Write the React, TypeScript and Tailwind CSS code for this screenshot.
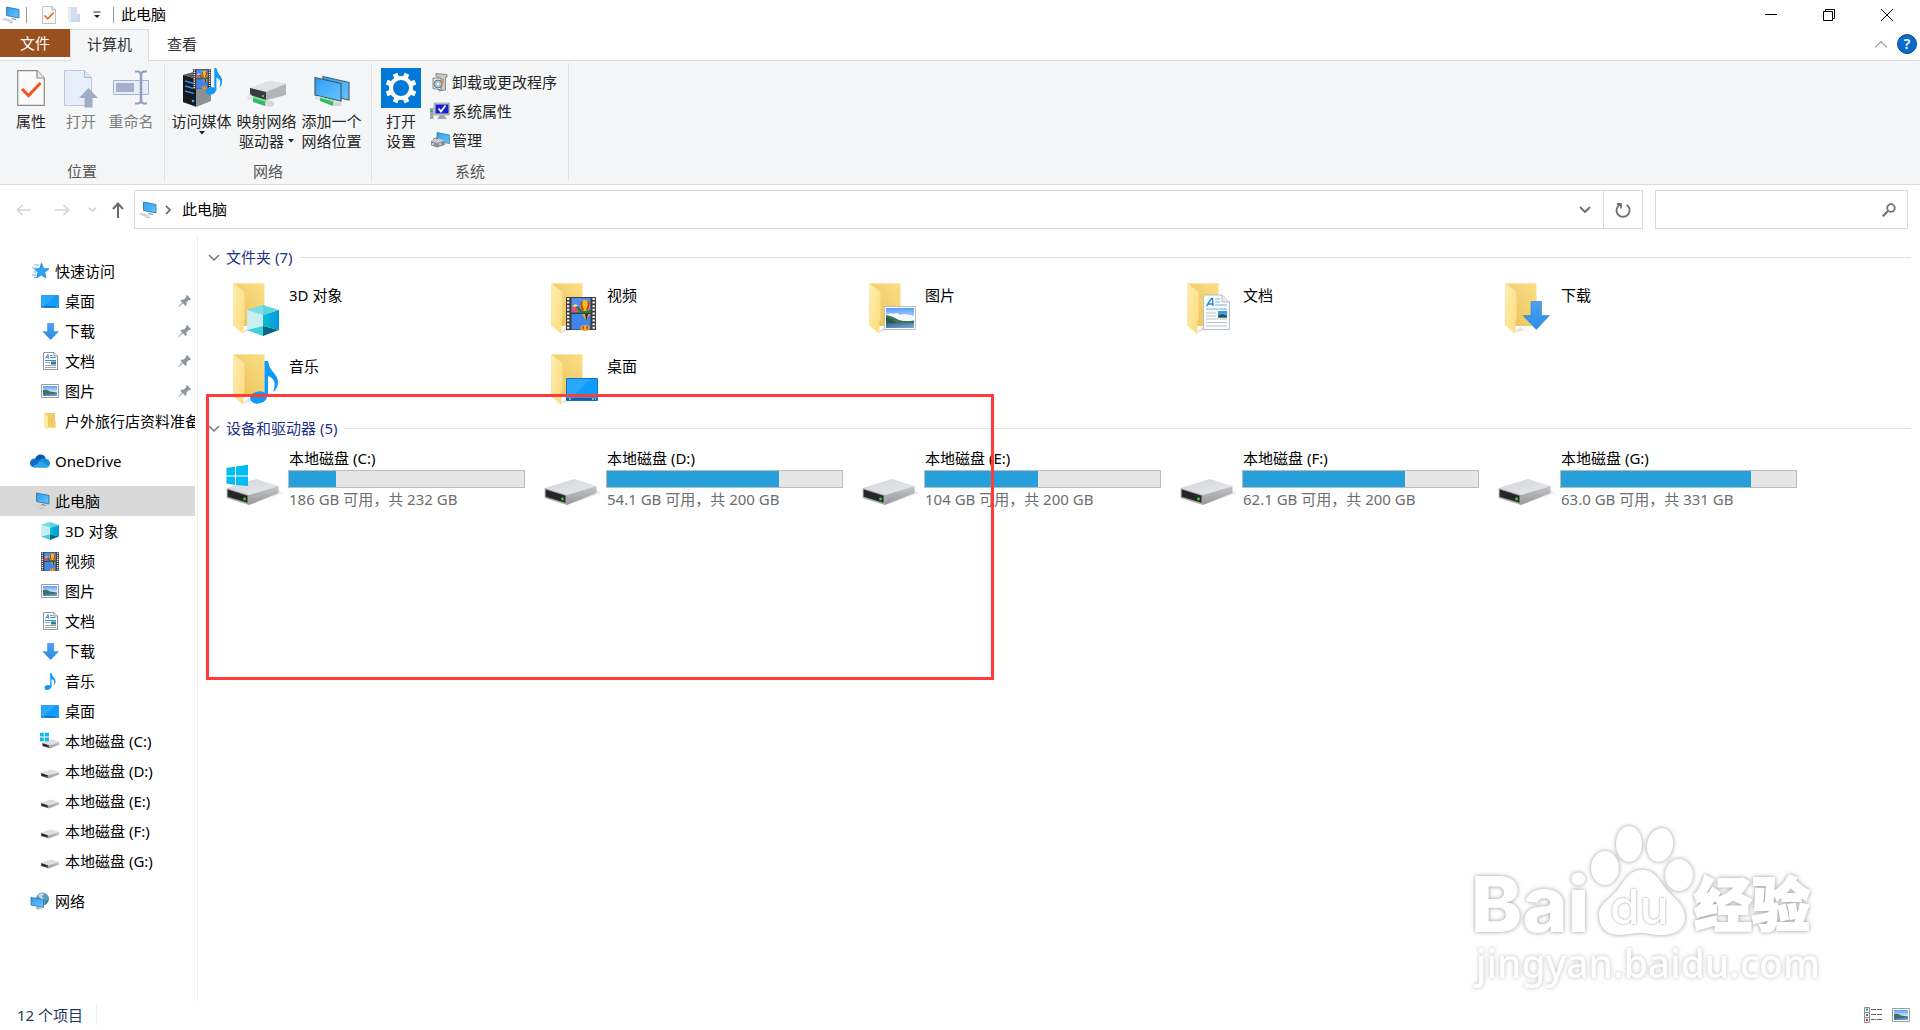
import React, { useState } from "react";

type Kind = "cube" | "film" | "picture" | "doc" | "download" | "music" | "desktop";

type NavItem = {
  id: string;
  label: string;
  icon: React.ReactNode;
  pinned?: boolean;
};

const drives = [
  { letter: "C", text: "186 GB 可用，共 232 GB", used: 20, system: true },
  { letter: "D", text: "54.1 GB 可用，共 200 GB", used: 73 },
  { letter: "E", text: "104 GB 可用，共 200 GB", used: 48 },
  { letter: "F", text: "62.1 GB 可用，共 200 GB", used: 69 },
  { letter: "G", text: "63.0 GB 可用，共 331 GB", used: 81 }
];

const folders: { label: string; kind: Kind }[] = [
  { label: "3D 对象", kind: "cube" },
  { label: "视频", kind: "film" },
  { label: "图片", kind: "picture" },
  { label: "文档", kind: "doc" },
  { label: "下载", kind: "download" },
  { label: "音乐", kind: "music" },
  { label: "桌面", kind: "desktop" }
];

// shared gradients, referenced by id from the icons below
function Gradients() {
  return (
    <svg className="absolute h-0 w-0" aria-hidden="true">
      <defs>
        <linearGradient id="g-folder" x1="0" y1="1" x2="1" y2="0">
          <stop offset="0" stopColor="#e9bf57" />
          <stop offset="1" stopColor="#fbdf86" />
        </linearGradient>
        <linearGradient id="g-flap" x1="0" y1="0" x2="1" y2="1">
          <stop offset="0" stopColor="#ffeeb0" />
          <stop offset="1" stopColor="#fcdb7c" />
        </linearGradient>
        <linearGradient id="g-screen" x1="0" y1="0" x2="1" y2="1">
          <stop offset="0" stopColor="#2e9df0" />
          <stop offset="1" stopColor="#66c4ff" />
        </linearGradient>
        <linearGradient id="g-sky" x1="0" y1="0" x2="0" y2="1">
          <stop offset="0" stopColor="#5a9cf5" />
          <stop offset="1" stopColor="#e8f4ff" />
        </linearGradient>
        <linearGradient id="g-sea" x1="0" y1="0" x2="1" y2="1">
          <stop offset="0" stopColor="#2f5f94" />
          <stop offset="1" stopColor="#7fb0d4" />
        </linearGradient>
        <linearGradient id="g-arrow" x1="0" y1="0" x2="0" y2="1">
          <stop offset="0" stopColor="#4ba0ee" />
          <stop offset="1" stopColor="#2a8fe8" />
        </linearGradient>
        <linearGradient id="g-cube" x1="0" y1="0" x2="1" y2="0">
          <stop offset="0" stopColor="#06bfd6" />
          <stop offset="1" stopColor="#0a93dc" />
        </linearGradient>
        <linearGradient id="g-side" x1="0" y1="0" x2="0" y2="1">
          <stop offset="0" stopColor="#c4c5c8" />
          <stop offset="1" stopColor="#97989b" />
        </linearGradient>
        <linearGradient id="g-top" x1="0" y1="0" x2="1" y2="1">
          <stop offset="0" stopColor="#d3d4d8" />
          <stop offset="1" stopColor="#e9eaed" />
        </linearGradient>
      </defs>
    </svg>
  );
}

function Art({ kind }: { kind: Kind }) {
  switch (kind) {
    case "cube":
      return (
        <g>
          <path d="M37 25 53 30 37 35 21 30Z" fill="#5fd3de" />
          <path d="M37 25V35L21 30Z" fill="#7bdde5" />
          <path d="M21 30 37 35V46L21 50Z" fill="#c9eff2" />
          <path d="M53 30 37 35V46L53 50Z" fill="url(#g-cube)" />
          <path d="M21 50 37 46V56Z" fill="#3fd0dc" />
          <path d="M53 50 37 46V56Z" fill="#046a80" />
        </g>
      );
    case "film":
      return (
        <g>
          <path d="M22 17H52V50H22Z" fill="#3c3c3e" />
          <path d="M24.2 18V50M49.7 18V50" stroke="#f1f1f1" strokeWidth="2.4" strokeDasharray="2 1.6" />
          <path d="M27.5 18H46.5V32.5H27.5Z" fill="#4f8ff0" />
          <path d="M27.5 34H46.5V49.5H27.5Z" fill="#4285ea" />
          <path d="M27.5 27 32 25 37 29 46.5 30V32.5H27.5Z" fill="#2f7a3f" />
          <path d="M27.5 27 31 26 35 32H27.5Z" fill="#e0508a" />
          <ellipse cx="41" cy="25.5" rx="5" ry="5.5" fill="#f0c020" />
          <path d="M38 21.5Q36 26 39.5 30M44 21.5Q46 26 42.5 30" stroke="#d0342c" strokeWidth="1.8" fill="none" />
          <path d="M38 34H46.5L43 39H41Z" fill="#e8a820" />
          <path d="M41 34H44L42.5 41Z" fill="#2d2850" />
          <ellipse cx="41" cy="48" rx="4.5" ry="3" fill="#f0b020" />
          <path d="M39 46V49.5M43 46V49.5" stroke="#d0342c" strokeWidth="1.5" />
          <path d="M28 26 32 24 34 26 31 27Z" fill="#f4e070" />
        </g>
      );
    case "picture":
      return (
        <g>
          <path d="M22.5 26.5H53.5V49.5H22.5Z" fill="#fff" stroke="#b4bcc4" />
          <path d="M24 28H52V43H24Z" fill="url(#g-sky)" />
          <path d="M24 35Q27 32 31 34L35 33 38 35 43 34 52 36V42H24Z" fill="#f3f9fd" />
          <path d="M24 35Q30 36 35 39T52 40.500V43H24Z" fill="#3f7359" />
          <path d="M24 43H52V48H24Z" fill="url(#g-sea)" />
          <path d="M24 37Q29 39 34 43H24Z" fill="#2c5a3c" />
        </g>
      );
    case "doc":
      return (
        <g>
          <path d="M23.500 15H42L49.500 22V49.500H23.500Z" fill="#fafbfc" stroke="#b9bec4" />
          <path d="M42 15V22H49.500" fill="#e8ebee" stroke="#b9bec4" />
          <path d="M26.500 26 31.500 18.500H32.500L33 26M28 24H33" stroke="#2a86cc" strokeWidth="1.400" fill="none" />
          <path d="M35 19H40M35 22H40M35 25H47M26 29H47" stroke="#71b5e2" />
          <path d="M26 33H36M26 36H36M26 39H47M26 42.500H47M26 46H47" stroke="#bfc4c9" />
          <path d="M38 31H47V37.500H38Z" fill="#3f98dd" />
          <path d="M38 36 42 34 47 36V37.500H38Z" fill="#234f4f" />
        </g>
      );
    case "download":
      return (
        <path d="M33 21.500H43.500V35.500H51.500L38.300 49.500 25 35.500H33Z" fill="url(#g-arrow)" stroke="#2d83cf" strokeWidth=".6" />
      );
    case "music":
      return (
        <g fill="#0f9af5">
          <ellipse cx="32.500" cy="46.500" rx="8.500" ry="6" transform="rotate(-12 32.500 46.500)" />
          <path d="M38.500 10H42Q43 17 48 22 54 29 51 36 50 39 47 41 50 33 47.500 29 45.500 26 42 25V46H38.500Z" />
        </g>
      );
    default:
      return (
        <g>
          <path d="M22.500 27.500H53.500V49.500H22.500Z" fill="#109cfb" stroke="#1272b8" />
          <path d="M23 28H47L27 47H23Z" fill="#29a8ff" />
          <path d="M23 48H53" stroke="#0c4f86" strokeWidth="1.500" />
          <path d="M25 48H27M48 48H50M51 48H52" stroke="#fff" />
        </g>
      );
  }
}

const smallBox: Record<Kind, { box: string; size: string }> = {
  cube: { box: "21 25 32 31", size: "h-[18px] w-[18px]" },
  film: { box: "22 17 30 33", size: "h-[19px] w-[18px]" },
  picture: { box: "22 26 32 24", size: "h-[14px] w-[18px]" },
  doc: { box: "23 14 27 36", size: "h-[18px] w-[15px]" },
  download: { box: "24 21 28 29", size: "h-[17px] w-[17px]" },
  music: { box: "23 10 30 43", size: "h-[17px] w-[12px]" },
  desktop: { box: "22 27 32 23", size: "h-[13px] w-[18px]" }
};

function SmallIcon({ kind }: { kind: Kind }) {
  // these two lose their frames when scaled down, so they get their own drawing
  if (kind === "picture") {
    return (
      <svg viewBox="0 0 18 14" className="h-[14px] w-[18px]" aria-hidden="true">
        <path d="M.5.5H17.500V13.500H.5Z" fill="#fff" stroke="#9a9ea2" />
        <path d="M2 2H16V9H2Z" fill="url(#g-sky)" />
        <path d="M2 6Q6 5 9 7.500L16 8.500V10H2Z" fill="#3f7359" />
        <path d="M2 9.500H16V12H2Z" fill="url(#g-sea)" />
      </svg>
    );
  }
  if (kind === "doc") {
    return (
      <svg viewBox="0 0 15 18" className="h-[18px] w-[15px]" aria-hidden="true">
        <path d="M.5.5H11L14.500 4V17.500H.5Z" fill="#fff" stroke="#8f9498" />
        <path d="M11 .5V4H14.500" fill="#e3e6e8" stroke="#8f9498" />
        <path d="M2.500 6.500 5 2.500 5.500 6.500M3.500 5.500H5.500" fill="none" stroke="#2a86cc" />
        <path d="M7 3.500H9.500M7 5.500H12.500M2 8.500H13" stroke="#2f8fd4" />
        <path d="M2 10.500H7M2 13.500H13M2 15.500H13" stroke="#9da2a6" />
        <path d="M8 9.500H13V12.500H8Z" fill="#2a7f9c" />
      </svg>
    );
  }
  const { box, size } = smallBox[kind];
  return (
    <svg viewBox={box} preserveAspectRatio="none" className={size} aria-hidden="true">
      <Art kind={kind} />
    </svg>
  );
}

function FolderIcon({ kind }: { kind: Kind }) {
  return (
    <svg viewBox="0 0 62 58" className="h-[58px] w-[62px] shrink-0" aria-hidden="true">
      <path d="M16 53 26 50 22 47Z" fill="#e4e4e4" />
      <path d="M7.500 3.500H38.500V46H7.500Z" fill="url(#g-folder)" />
      <path d="M7.500 3.500H38.500" stroke="#fbe6a4" />
      <path d="M7.500 3.500 18.500 12V40L17.500 41V54L7.500 46Z" fill="url(#g-flap)" />
      <Art kind={kind} />
    </svg>
  );
}

function WinLogo() {
  return (
    <g>
      <path d="M.5 4 9 2.500V11.500H.5ZM10 2.400 22 .7V11.500H10ZM.5 12.500H9V21L.5 19.500ZM10 12.500H22V22L10 21Z" fill="#00bcf2" />
    </g>
  );
}

function DriveArt() {
  return (
    <g>
      <path d="M24 41 57 29 52 26Z" fill="#e9e9e9" />
      <path d="M.7 24 30 15 52.500 22 23 31Z" fill="url(#g-top)" />
      <path d="M23 31 52.500 22V29L23 41Z" fill="url(#g-side)" />
      <path d="M.7 24 23 31V41L.7 34Z" fill="#a6a7a9" />
      <path d="M1.700 25.500 21.500 31.700V38.700L1.700 32.700Z" fill="#252628" />
      <path d="M17.300 33.500H19.800V36.300H17.300Z" fill="#2fd02f" />
    </g>
  );
}

function DriveIcon({ system }: { system?: boolean }) {
  return (
    <svg viewBox="0 0 62 44" className="mb-px h-[44px] w-[62px] shrink-0" aria-hidden="true">
      <DriveArt />
      {system && <WinLogo />}
    </svg>
  );
}

function SmallDrive({ system }: { system?: boolean }) {
  return (
    <svg viewBox="-2 -6 58 50" className="h-[18px] w-5" aria-hidden="true">
      <g transform={system ? "translate(4 0) scale(.95 1)" : undefined}>
        <DriveArt />
      </g>
      {system && (
        <path d="M-2-5H9V6H-2ZM12-5H24V6H12ZM-2 9H9V20H-2ZM12 9H24V20H12Z" fill="#0fb8ee" />
      )}
    </svg>
  );
}

function PcIcon() {
  return (
    <svg viewBox="0 0 20 18" className="h-[18px] w-5" aria-hidden="true">
      <path d="M6.500 1 19 3.500V12L6.500 9.500Z" fill="url(#g-screen)" stroke="#276ea3" strokeWidth=".8" />
      <path d="M12 12 16 13V14L11 13Z" fill="#7c8b98" />
      <path d="M1 13 5 12 13 14.500 9 16Z" fill="#cdd3d8" />
      <path d="M9 16.500 12 15.500 14 16 11 17.500Z" fill="#b9c0c7" />
    </svg>
  );
}

function StarIcon() {
  return (
    <svg viewBox="0 0 20 18" className="h-[18px] w-5" aria-hidden="true">
      <path d="M11.500 1 13.500 6.500 19 6.800 14.800 10.300 16 16 11.300 13 6.500 16 8 10.500 4.500 7 9.500 6.500Z" fill="#2ca4f5" stroke="#1f7fc8" strokeWidth=".7" />
      <path d="M4 3H9M2 6H6M3 10H6M2 13H6M4 15.500H6" stroke="#58aee8" strokeWidth=".9" />
    </svg>
  );
}

function CloudIcon() {
  return (
    <svg viewBox="0 0 20 14" className="h-[14px] w-5" aria-hidden="true">
      <path d="M5 5Q6.500.5 10.500.5 14.500.5 15.800 4.500L10 9Z" fill="#0a54b4" />
      <path d="M4.500 13.500Q0 13 0 9 .5 4.500 5 4.500 8 4.500 10 7L7 13.500Z" fill="#0f6cc9" />
      <path d="M9 6.500Q12 3.500 15.500 4.500 20 5.500 20 9.500 19.500 13.500 16 13.500H8Z" fill="#1490df" />
      <path d="M2.500 12.500 11 7.500 19 12Q17.500 13.500 16 13.500H4.500Q3.200 13.300 2.500 12.500Z" fill="#28a8ea" />
    </svg>
  );
}

function NetworkIcon() {
  return (
    <svg viewBox="0 0 20 18" className="h-[18px] w-5" aria-hidden="true">
      <circle cx="12.500" cy="7" r="6.500" fill="#5a9bbb" />
      <path d="M8 3Q12 0 14 2L12 5 14 7 11 8Z" fill="#b8dce9" />
      <path d="M15 9 18.500 7Q18 11 15.500 12.500Z" fill="#3b7fa3" />
      <path d="M1 5.500 13.500 7.500V15.500L1 13Z" fill="url(#g-screen)" stroke="#2d77ab" strokeWidth=".8" />
      <path d="M5 16 8 14.800 12 16.500 8 17.800Z" fill="#aab4bd" />
    </svg>
  );
}

function PlainFolder() {
  return (
    <svg viewBox="0 0 14 18" className="h-[18px] w-[14px]" aria-hidden="true">
      <path d="M1 1H12V15H1Z" fill="#f0cb68" />
      <path d="M12 9H13V16H5V15H12Z" fill="#ffe28a" />
      <path d="M1 1 5 4V18L1 15Z" fill="#ffe9a3" />
    </svg>
  );
}

function PinIcon() {
  return (
    <svg viewBox="0 0 14 14" className="h-[14px] w-[14px]" aria-hidden="true">
      <path d="M9 1 13 5 12 6.300 10.800 6 8.500 8.500V11L7.500 12 4.800 9.200 1 13 .5 12.500 4 8.500 2.500 6.500 3.500 5.500H6L8.200 3 8 2Z" fill="#8d979f" />
    </svg>
  );
}

function PropertiesIcon({ className }: { className: string }) {
  return (
    <svg viewBox="0 0 28 36" className={className} aria-hidden="true">
      <path d="M.7.7H20L27.300 8V35.300H.7Z" fill="#fafafa" stroke="#8c8c8c" strokeWidth="1.200" />
      <path d="M20 .7V8H27.300" fill="#ececec" stroke="#8c8c8c" strokeWidth="1.200" />
      <path d="M5 19 11.500 25.500 23.500 13" fill="none" stroke="#f0561a" strokeWidth="3" />
    </svg>
  );
}

function OpenIcon() {
  return (
    <svg viewBox="0 0 34 40" className="h-10 w-[34px]" aria-hidden="true">
      <path d="M.5 2.500H20.500L27.500 9.500V37.500H.5Z" fill="#e6eefa" stroke="#b9c9e2" />
      <path d="M20.500 2.500V9.500H27.500" fill="#dbe6f5" stroke="#a9b9d4" />
      <path d="M24.500 20 34 30H28.500V39.500H20.500V30H15Z" fill="#9fadc8" />
    </svg>
  );
}

function RenameIcon() {
  return (
    <svg viewBox="0 0 36 40" className="h-10 w-9" aria-hidden="true">
      <path d="M.5 12.500H35.500V26.500H.5Z" fill="#e6eefa" stroke="#a5b4cf" />
      <path d="M3 15H21V24H3Z" fill="#a3b1ca" />
      <path d="M28 5V34" stroke="#8fa0bd" strokeWidth="2.500" />
      <path d="M22 3.500H25Q28 4 28 7 28 4 31 3.500H34M22 35.500H25Q28 35 28 32 28 35 31 35.500H34" fill="none" stroke="#8fa0bd" strokeWidth="2" />
    </svg>
  );
}

function MediaIcon() {
  return (
    <svg viewBox="0 0 40 40" className="h-10 w-10" aria-hidden="true">
      <path d="M1 7 12 4 29 9V33L14 39 1 34Z" fill="#8f9094" />
      <path d="M1 7 14 11V38.500L1 34Z" fill="#17191d" />
      <path d="M1 7 12 4 27 7 14 11Z" fill="#5f6166" />
      <path d="M3 13 12 15.500M3 18 12 20.500M3 23 12 25.500" stroke="#2d93e8" strokeWidth="1.300" />
      <circle cx="11" cy="33" r="1.300" fill="#26b5ff" />
      <svg x="11" y="1" width="18" height="20" viewBox="22 17 30 33" preserveAspectRatio="none">
        <Art kind="film" />
      </svg>
      <svg x="23" y="0" width="18" height="27" viewBox="23 10 30 43" preserveAspectRatio="none">
        <Art kind="music" />
      </svg>
    </svg>
  );
}

function MapDriveIcon() {
  return (
    <svg viewBox="0 0 40 40" className="h-10 w-10" aria-hidden="true">
      <path d="M3 21 23 13 39 16V27L20 32 3 28Z" fill="#b3b4b7" />
      <path d="M3 20 23 12.500 39 16 19 24Z" fill="#e0e1e4" />
      <path d="M3 20 19 24V32L3 28Z" fill="#3b3c3f" />
      <path d="M15 27H17V29H15Z" fill="#31d831" />
      <path d="M0 28 3 26 7 29 6 33 1 31Z" fill="#e2e4e6" />
      <path d="M6 28 19 32 18 38 6 34Z" fill="#39b768" />
      <path d="M6 28 19 32 19 34 6 30Z" fill="#7fe09b" />
      <path d="M19 32 25 33 28 36 25 39 18 38Z" fill="#d5d8db" />
    </svg>
  );
}

function AddPlaceIcon() {
  return (
    <svg viewBox="0 0 36 40" className="h-10 w-9" aria-hidden="true">
      <path d="M9 8.500 35 14.500V32L9 26Z" fill="url(#g-screen)" stroke="#4c6476" strokeWidth="1.200" />
      <path d="M1 9.500 27 15.500V33L1 27Z" fill="url(#g-screen)" stroke="#3f5a6d" strokeWidth="1.200" />
      <path d="M1 28 6 28.500 7 33 1 31Z" fill="#e2e4e6" />
      <path d="M6 28.500 20 32.500 19 38 6 33Z" fill="#39b768" />
      <path d="M6 28.500 20 32.500V34L6 30Z" fill="#8fe7a4" />
      <path d="M20 33 27 34V38L19 38Z" fill="#d5d8db" />
    </svg>
  );
}

function GearIcon() {
  const teeth = [0, 45, 90, 135, 180, 225, 270, 315];
  return (
    <svg viewBox="0 0 40 40" className="h-10 w-10" aria-hidden="true">
      <path d="M0 0H40V40H0Z" fill="#0078d7" />
      <circle cx="20" cy="20" r="10" fill="none" stroke="#fff" strokeWidth="4" />
      {teeth.map((a) => (
        <path key={a} d="M17.500 10V4.500H22.500V10Z" fill="#fff" transform={`rotate(${a + 22.5} 20 20)`} />
      ))}
    </svg>
  );
}

function UninstallIcon() {
  return (
    <svg viewBox="0 0 20 20" className="h-5 w-5" aria-hidden="true">
      <path d="M6 1.500 17 2.500V5H15.500V18L9 19V6L6 4Z" fill="#c6c8ca" stroke="#777a7d" strokeWidth=".8" />
      <path d="M3 6H11V18L3 16.500Z" fill="#e3e6e8" stroke="#6d7175" strokeWidth=".8" />
      <circle cx="8" cy="12" r="4" fill="#a9c5d2" stroke="#4f626c" strokeWidth=".8" />
      <circle cx="8" cy="12" r="1.200" fill="#fff" />
      <path d="M11 6.500 14 7V12L12 10Z" fill="#f0963a" />
    </svg>
  );
}

function SystemIcon() {
  return (
    <svg viewBox="0 0 20 20" className="h-5 w-5" aria-hidden="true">
      <path d="M0 7H3.500V18H0Z" fill="#a2a6aa" />
      <path d="M.8 9H2.500V11H.8Z" fill="#27b53c" />
      <path d="M4 2H20V14H4Z" fill="#c9cccf" stroke="#8d9194" strokeWidth=".6" />
      <path d="M5.500 3.500H18.500V12.500H5.500Z" fill="#1420c8" />
      <path d="M8.500 7.500 11 10.500 15.500 4.500" fill="none" stroke="#fff" strokeWidth="1.800" />
      <path d="M10 14H14L17 18H7Z" fill="#a5a8ab" />
    </svg>
  );
}

function ManageIcon() {
  return (
    <svg viewBox="0 0 20 20" className="h-5 w-5" aria-hidden="true">
      <path d="M7 2.500 19.500 5V13.500L7 11Z" fill="url(#g-screen)" stroke="#3c7097" strokeWidth=".7" />
      <path d="M1 11 9 8.500 15 10.500V15L7 17.500 1 15.500Z" fill="#8a9096" />
      <path d="M1 11 9 8.500 15 10.500 7 13Z" fill="#c9cdd1" />
      <path d="M3 9.500Q5 7 8 8.500" fill="none" stroke="#6a7075" />
      <path d="M3 13V15M10 13V15" stroke="#eee" strokeWidth="1.300" />
    </svg>
  );
}

function Chevron({ className, d = "M1 1 6 6 11 1", w = "1.5" }: { className: string; d?: string; w?: string }) {
  return (
    <svg viewBox="0 0 12 7" className={className} fill="none" stroke="currentColor" strokeWidth={w} aria-hidden="true">
      <path d={d} />
    </svg>
  );
}

function Caret() {
  return (
    <svg viewBox="0 0 6 4" className="inline-block h-1 w-1.5" aria-hidden="true">
      <path d="M0 0H6L3 3.500Z" fill="#222" />
    </svg>
  );
}

function BigButton({
  icon,
  children,
  width = "w-[50px]",
  disabled
}: {
  icon: React.ReactNode;
  children: React.ReactNode;
  width?: string;
  disabled?: boolean;
}) {
  return (
    <button
      disabled={disabled}
      className={`${width} flex shrink-0 flex-col items-center whitespace-nowrap leading-5 text-[#262626] disabled:text-[#7d7d7d]`}
    >
      <span className="mb-[3px] flex h-10 items-center justify-center">{icon}</span>
      {children}
    </button>
  );
}

function Group({ label, width, children }: { label: string; width: string; children: React.ReactNode }) {
  return (
    <div className={`${width} flex flex-col justify-between border-r border-[#e0e1e3] pt-[5px]`}>
      <div className="flex pl-1">{children}</div>
      <div className="text-center leading-5 text-[#555]">{label}</div>
    </div>
  );
}

function SectionTitle({ children }: { children: React.ReactNode }) {
  return (
    <h2 className="flex h-6 items-center pl-[10px] text-[#1e3287]">
      <Chevron className="mr-[6px] h-[7px] w-3 text-[#777]" />
      {children}
      <span className="ml-2 h-px flex-1 bg-[#e2e2e2]" />
    </h2>
  );
}

function Watermark() {
  return (
    <svg
      viewBox="0 0 360 180"
      className="pointer-events-none absolute right-[93px] bottom-[36px] h-[180px] w-[360px]"
      fill="#fff"
      aria-hidden="true"
    >
      <g className="drop-shadow-[0_0_2px_#999]">
        <text x="4" y="118" className="font-['Inter'] text-[77px] font-extrabold">Bai</text>
        <text
          x="227"
          y="112"
          stroke="#fff"
          strokeWidth="2"
          className="font-['Noto_Sans_CJK_SC',sans-serif] text-[58px] font-black"
        >
          经验
        </text>
        <ellipse cx="138" cy="54" rx="14" ry="17" />
        <ellipse cx="162" cy="30" rx="13" ry="18" />
        <ellipse cx="193" cy="31" rx="13" ry="17" transform="rotate(12 193 31)" />
        <ellipse cx="212" cy="61" rx="14" ry="16" />
        <path d="M175 56C188 56 192 66 199 75 208 86 218 90 218 104 217 118 205 121 194 121 184 121 182 119 174 119 164 119 160 121 150 121 138 120 132 112 132 101 132 89 144 85 152 74 159 64 163 56 175 56Z" />
      </g>
      <text x="143" y="110" className="font-['Inter'] text-[48px] font-medium drop-shadow-[0_0_1px_#999]">du</text>
      <text x="9" y="164" className="font-['Noto_Sans'] text-[39px] font-medium drop-shadow-[0_0_2px_#bbb]">
        jingyan.baidu.com
      </text>
    </svg>
  );
}

export default function App() {
  const [selected, setSelected] = useState("pc");
  const [query, setQuery] = useState("");

  const quick: NavItem[] = [
    { id: "q-desktop", label: "桌面", icon: <SmallIcon kind="desktop" />, pinned: true },
    { id: "q-download", label: "下载", icon: <SmallIcon kind="download" />, pinned: true },
    { id: "q-doc", label: "文档", icon: <SmallIcon kind="doc" />, pinned: true },
    { id: "q-picture", label: "图片", icon: <SmallIcon kind="picture" />, pinned: true },
    { id: "q-folder", label: "户外旅行店资料准备", icon: <PlainFolder /> }
  ];

  const order: Kind[] = ["cube", "film", "picture", "doc", "download", "music", "desktop"];
  const pcItems: NavItem[] = [
    ...order.map((kind) => ({
      id: kind,
      label: folders.find((f) => f.kind === kind)!.label,
      icon: <SmallIcon kind={kind} />
    })),
    ...drives.map((d) => ({
      id: d.letter,
      label: `本地磁盘 (${d.letter}:)`,
      icon: <SmallDrive system={d.system} />
    }))
  ];

  const row = (item: NavItem, child = false) => (
    <a
      key={item.id}
      href={`#${item.id}`}
      onClick={() => setSelected(item.id)}
      className={`flex h-[30px] items-center overflow-hidden whitespace-nowrap pr-[3px] ${child ? "pl-10" : "pl-[30px]"} ${
        selected === item.id ? "bg-[#d9d9d9]" : ""
      }`}
    >
      <span className="mr-[5px] flex w-5 shrink-0 justify-center">{item.icon}</span>
      {item.label}
      {item.pinned && (
        <span className="ml-auto">
          <PinIcon />
        </span>
      )}
    </a>
  );

  return (
    <div className="relative flex min-h-screen flex-col bg-white font-['Noto_Sans','Noto_Sans_CJK_SC',sans-serif] text-[15px] leading-5 text-black">
      <Gradients />

      <header className="flex h-[29px] items-center">
        <span className="w-[21px]">
          <PcIcon />
        </span>
        <span className="ml-[5px] h-4 w-px bg-[#999]" />
        <button aria-label="属性" className="ml-[15px]">
          <PropertiesIcon className="h-[18px] w-[14px]" />
        </button>
        <button aria-label="新建文件夹" className="ml-3">
          <svg viewBox="0 0 13 18" className="h-[18px] w-[13px]" aria-hidden="true">
            <path d="M0 1H9V15H0Z" fill="#d3dfee" />
            <path d="M9 8H12V16H3V14H9Z" fill="#c9d8ea" />
            <path d="M0 1 3 3V18L0 15Z" fill="#e5edf7" />
          </svg>
        </button>
        <button aria-label="自定义快速访问工具栏" className="ml-3">
          <svg viewBox="0 0 8 8" className="h-2 w-2" aria-hidden="true">
            <path d="M.5 1H7.500" stroke="#222" />
            <path d="M1 4H7L4 7Z" fill="#222" />
          </svg>
        </button>
        <span className="ml-3 h-4 w-px bg-[#999]" />
        <h1 className="ml-[7px] pb-px">此电脑</h1>
        <div className="ml-auto flex pr-1">
          <button aria-label="最小化" className="flex h-7 w-[58px] items-center justify-center">
            <svg viewBox="0 0 12 12" className="h-3 w-3" stroke="#000" aria-hidden="true">
              <path d="M0 5.500H12" />
            </svg>
          </button>
          <button aria-label="还原" className="flex h-7 w-[58px] items-center justify-center">
            <svg viewBox="0 0 12 12" className="h-3 w-3" fill="none" stroke="#000" aria-hidden="true">
              <path d="M.5 2.500H9.500V11.500H.5ZM2.500 2.500V.5H11.500V9.500H9.500" />
            </svg>
          </button>
          <button aria-label="关闭" className="flex h-7 w-[58px] items-center justify-center">
            <svg viewBox="0 0 12 12" className="h-3 w-3" stroke="#000" aria-hidden="true">
              <path d="M0 0 12 12M12 0 0 12" />
            </svg>
          </button>
        </div>
      </header>

      <nav className="flex h-8 items-start border-b border-[#dadbdc]">
        <button className="h-7 w-[70px] bg-[#994f1e] text-white">文件</button>
        <button className="-mb-px h-8 w-[79px] border border-b-0 border-[#dadbdc] bg-[#f5f6f7] pb-[3px] text-[#333]">
          计算机
        </button>
        <button className="h-[31px] w-[66px] pb-[2px] text-[#333]">查看</button>
        <div className="ml-auto flex h-[30px] items-center gap-[10px] pr-[3px]">
          <button aria-label="最小化功能区" className="text-[#999]">
            <Chevron className="h-[7px] w-3" d="M0 6.500 6 .5 12 6.500" w="1.2" />
          </button>
          <button
            aria-label="帮助"
            className="flex h-5 w-5 items-center justify-center rounded-full border border-[#0a4a86] bg-[#0a6bcb] text-sm font-semibold text-white"
          >
            ?
          </button>
        </div>
      </nav>

      <section className="flex h-[124px] border-b border-[#dadbdc] bg-[#f5f6f7] pb-[3px] pt-[2px]">
        <Group label="位置" width="w-[165px]">
          <div className="flex pl-[2px]">
            <BigButton icon={<PropertiesIcon className="h-9 w-7" />}>属性</BigButton>
            <BigButton icon={<OpenIcon />} disabled>
              打开
            </BigButton>
            <BigButton icon={<RenameIcon />} disabled>
              重命名
            </BigButton>
          </div>
        </Group>
        <Group label="网络" width="w-[207px]">
          <BigButton icon={<MediaIcon />} width="w-[65px]">
            <span>访问媒体</span>
            <span className="flex h-1">
              <Caret />
            </span>
          </BigButton>
          <BigButton icon={<MapDriveIcon />} width="w-[65px]">
            <span>映射网络</span>
            <span className="flex items-center gap-1">
              驱动器
              <Caret />
            </span>
          </BigButton>
          <BigButton icon={<AddPlaceIcon />} width="w-[65px]">
            <span>添加一个</span>
            <span>网络位置</span>
          </BigButton>
        </Group>
        <Group label="系统" width="w-[197px]">
          <BigButton icon={<GearIcon />}>
            <span>打开</span>
            <span>设置</span>
          </BigButton>
          <div className="ml-1 flex flex-col text-[#262626]">
            <button className="flex h-7 items-center gap-[2px] whitespace-nowrap">
              <UninstallIcon />
              卸载或更改程序
            </button>
            <button className="flex h-[29px] items-center gap-[2px]">
              <SystemIcon />
              系统属性
            </button>
            <button className="flex h-[29px] items-center gap-[2px]">
              <ManageIcon />
              管理
            </button>
          </div>
        </Group>
      </section>

      <div className="flex items-center py-[5px] pr-3">
        <div className="flex w-[134px] shrink-0 items-center pl-4">
          <button aria-label="后退" disabled className="text-[#d4d4d4]">
            <svg viewBox="0 0 15 12" className="h-3 w-[15px]" fill="none" stroke="currentColor" strokeWidth="1.600" aria-hidden="true">
              <path d="M6.500 1 1.500 6 6.500 11M1.500 6H15" />
            </svg>
          </button>
          <button aria-label="前进" disabled className="ml-6 text-[#d4d4d4]">
            <svg viewBox="0 0 15 12" className="h-3 w-[15px]" fill="none" stroke="currentColor" strokeWidth="1.600" aria-hidden="true">
              <path d="M8.500 1 13.500 6 8.500 11M13.500 6H0" />
            </svg>
          </button>
          <button aria-label="最近浏览的位置" disabled className="ml-[18px] text-[#d0d0d0]">
            <Chevron className="h-[5px] w-[9px]" w="2" />
          </button>
          <button aria-label="上移" className="ml-[15px] text-[#6a6a6a]">
            <svg viewBox="0 0 12 16" className="h-4 w-3" fill="none" stroke="currentColor" strokeWidth="2" aria-hidden="true">
              <path d="M1 7 6 1.500 11 7M6 2V16" />
            </svg>
          </button>
        </div>
        <div className="flex h-[39px] flex-1 items-center border border-[#d9d9d9] pl-[2px]">
          <PcIcon />
          <svg viewBox="0 0 7 10" className="ml-2 h-[10px] w-[7px]" fill="none" stroke="#666" strokeWidth="1.700" aria-hidden="true">
            <path d="M1 1 5 5 1 9" />
          </svg>
          <span className="ml-[10px] pb-px">此电脑</span>
          <button aria-label="以前的位置" className="ml-auto mr-3 text-[#707070]">
            <Chevron className="h-[7px] w-3" w="2" />
          </button>
          <button aria-label="刷新" className="flex h-full w-[39px] items-center justify-center border-l border-[#d9d9d9]">
            <svg viewBox="0 0 16 16" className="h-4 w-4" fill="none" stroke="#707070" strokeWidth="1.800" aria-hidden="true">
              <path d="M11.500 3Q15 5 14.500 9 13.500 14.500 8 14.800 2.500 14.500 1.500 9 1.500 5 5 2.500M2 2H6V6.500" />
            </svg>
          </button>
        </div>
        <label className="ml-3 flex h-[39px] w-[253px] items-center border border-[#d9d9d9] pr-[11px]">
          <input
            aria-label="搜索"
            value={query}
            onChange={(e) => setQuery(e.target.value)}
            className="min-w-0 flex-1 px-2 outline-none"
          />
          <svg viewBox="0 0 14 14" className="h-[14px] w-[14px]" fill="none" stroke="#707070" aria-hidden="true">
            <circle cx="9" cy="5" r="3.800" strokeWidth="1.700" />
            <path d="M6 8 .8 13.200" strokeWidth="2.200" />
          </svg>
        </label>
      </div>

      <div className="flex flex-1">
        <aside className="mt-[2px] flex w-[198px] shrink-0 flex-col gap-[10px] border-r border-[#f0f0f0] pr-[2px] pt-5">
          <div>
            {row({ id: "quick", label: "快速访问", icon: <StarIcon /> })}
            {quick.map((i) => row(i, true))}
          </div>
          {row({ id: "onedrive", label: "OneDrive", icon: <CloudIcon /> })}
          <div>
            {row({ id: "pc", label: "此电脑", icon: <PcIcon /> })}
            {pcItems.map((i) => row(i, true))}
          </div>
          {row({ id: "network", label: "网络", icon: <NetworkIcon /> })}
        </aside>

        <main className="min-w-0 flex-1 pr-[9px] pt-[11px]">
          <SectionTitle>文件夹 (7)</SectionTitle>
          <div className="mt-[11px] grid grid-cols-[repeat(auto-fill,318px)] gap-y-[13px] pl-7">
            {folders.map((f) => (
              <button key={f.kind} className="flex items-start text-left">
                <FolderIcon kind={f.kind} />
                <span className="pl-px pt-[5px]">{f.label}</span>
              </button>
            ))}
          </div>
          <div className="mt-[7px]">
            <SectionTitle>设备和驱动器 (5)</SectionTitle>
          </div>
          <div className="mt-2 grid grid-cols-[repeat(auto-fill,318px)] pl-7">
            {drives.map((d) => (
              <button key={d.letter} className="flex items-end text-left">
                <DriveIcon system={d.system} />
                <span className="w-[237px]">
                  <span className="block pl-px">本地磁盘 ({d.letter}:)</span>
                  <span className="mt-[2px] flex h-[18px] border border-[#bcbcbc] bg-[#e6e6e6]">
                    <span className="bg-[#26a0da]" style={{ width: `${d.used}%` }} />
                  </span>
                  <span className="mt-px block pl-px text-[#6d6d6d]">{d.text}</span>
                </span>
              </button>
            ))}
          </div>
        </main>
      </div>

      <footer className="flex h-[29px] items-center pb-px pl-[17px] pr-[10px] text-[#1e395b]">
        <span className="border-r border-[#f0f0f0] pr-[13px]">12 个项目</span>
        <div className="ml-auto flex items-center gap-[10px]">
          <button aria-label="详细信息">
            <svg viewBox="0 0 18 16" className="h-4 w-[18px]" fill="none" aria-hidden="true">
              <path d="M.5.5H5.500V15.500H.5ZM.5 5.500H5.500M.5 10.500H5.500" stroke="#8c8c8c" />
              <path d="M7 2.500H12M13 2.500H18M7 7.500H12M13 7.500H18M7 12.500H12M13 12.500H18" stroke="#666" />
              <path d="M2 2.500H4" stroke="#2c8a8a" strokeWidth="2" />
              <path d="M2 8H4" stroke="#3c6fc0" strokeWidth="2" />
              <path d="M2 13H4" stroke="#d03020" strokeWidth="2" />
            </svg>
          </button>
          <button aria-label="大缩略图">
            <SmallIcon kind="picture" />
          </button>
        </div>
      </footer>

      {/* highlighted area */}
      <div className="pointer-events-none absolute left-[206px] top-[394px] h-[286px] w-[788px] border-3 border-[#ff3b3b]" />
      <Watermark />
    </div>
  );
}
